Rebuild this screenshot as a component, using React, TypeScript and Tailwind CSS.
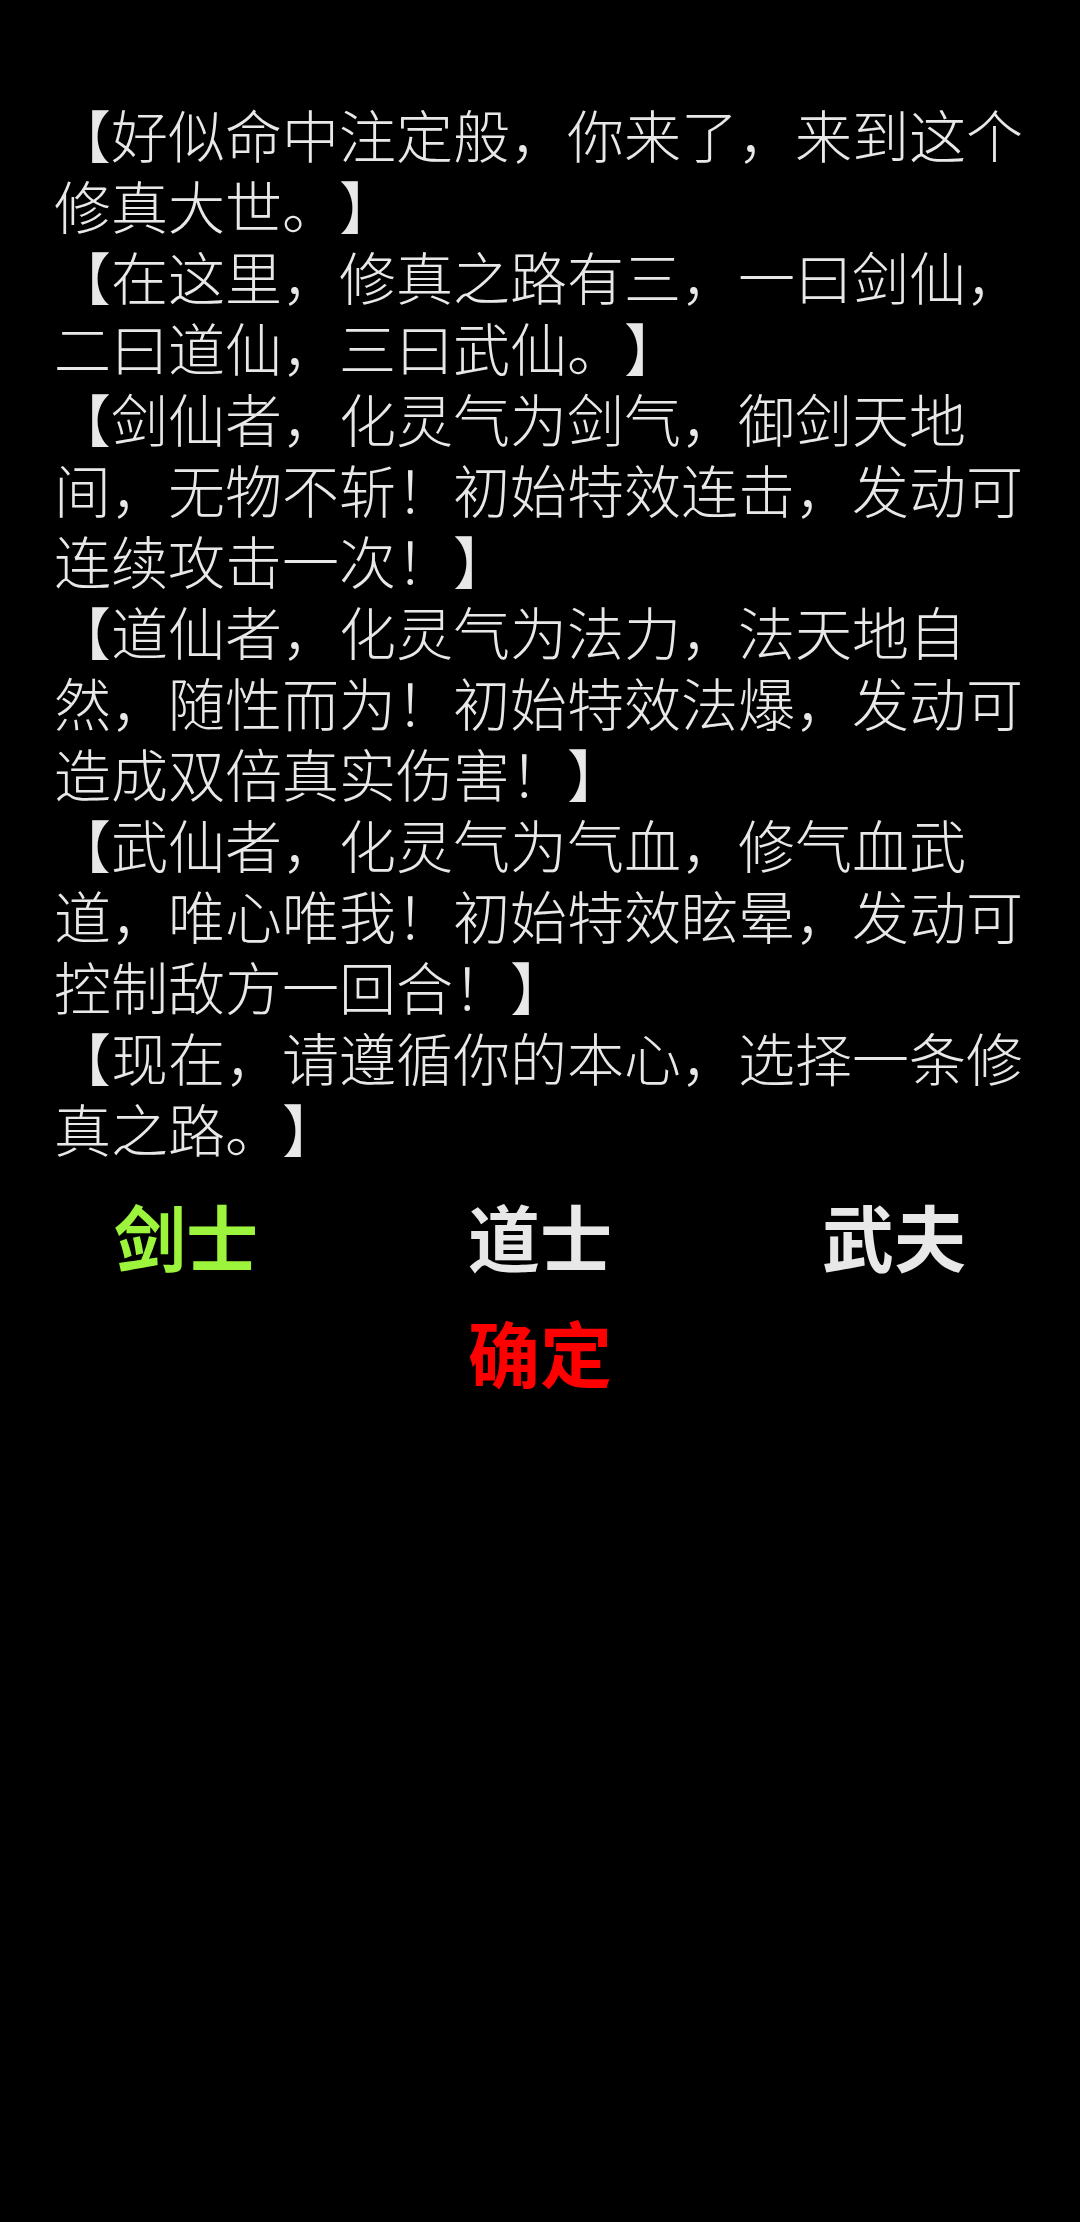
import React from "react";

const lines = [
  "【好似命中注定般，你来了，来到这个修真大世。】",
  "【在这里，修真之路有三，一曰剑仙，二曰道仙，三曰武仙。】",
  "【剑仙者，化灵气为剑气，御剑天地间，无物不斩！初始特效连击，发动可连续攻击一次！】",
  "【道仙者，化灵气为法力，法天地自然，随性而为！初始特效法爆，发动可造成双倍真实伤害！】",
  "【武仙者，化灵气为气血，修气血武道，唯心唯我！初始特效眩晕，发动可控制敌方一回合！】",
  "【现在，请遵循你的本心，选择一条修真之路。】",
];

export default function App() {
  return (
    <div
      className="w-[1080px] h-[2222px] bg-black overflow-hidden [text-spacing-trim:space-all]"
      style={{ fontFamily: '"Noto Sans CJK SC", "Noto Sans", sans-serif' }}
    >
      <div className="pt-[98px] px-[54px] text-[57px] leading-[71px] font-light text-[#e8e8e8]">
        {lines.map((l, i) => (
          <p key={i}>{l}</p>
        ))}
      </div>
      <div className="mt-[36px] ml-[9px] w-[1062px] grid grid-cols-3 text-[72px] leading-[72px] font-bold">
        <div className="text-center text-[#9cf53c]">剑士</div>
        <div className="text-center text-[#e8e8e8]">道士</div>
        <div className="text-center text-[#e8e8e8]">武夫</div>
      </div>
      <div className="mt-[44px] ml-[9px] w-[1062px] grid grid-cols-3 text-[72px] leading-[72px] font-bold">
        <div />
        <div className="text-center text-[#ff0000]">确定</div>
        <div />
      </div>
    </div>
  );
}
